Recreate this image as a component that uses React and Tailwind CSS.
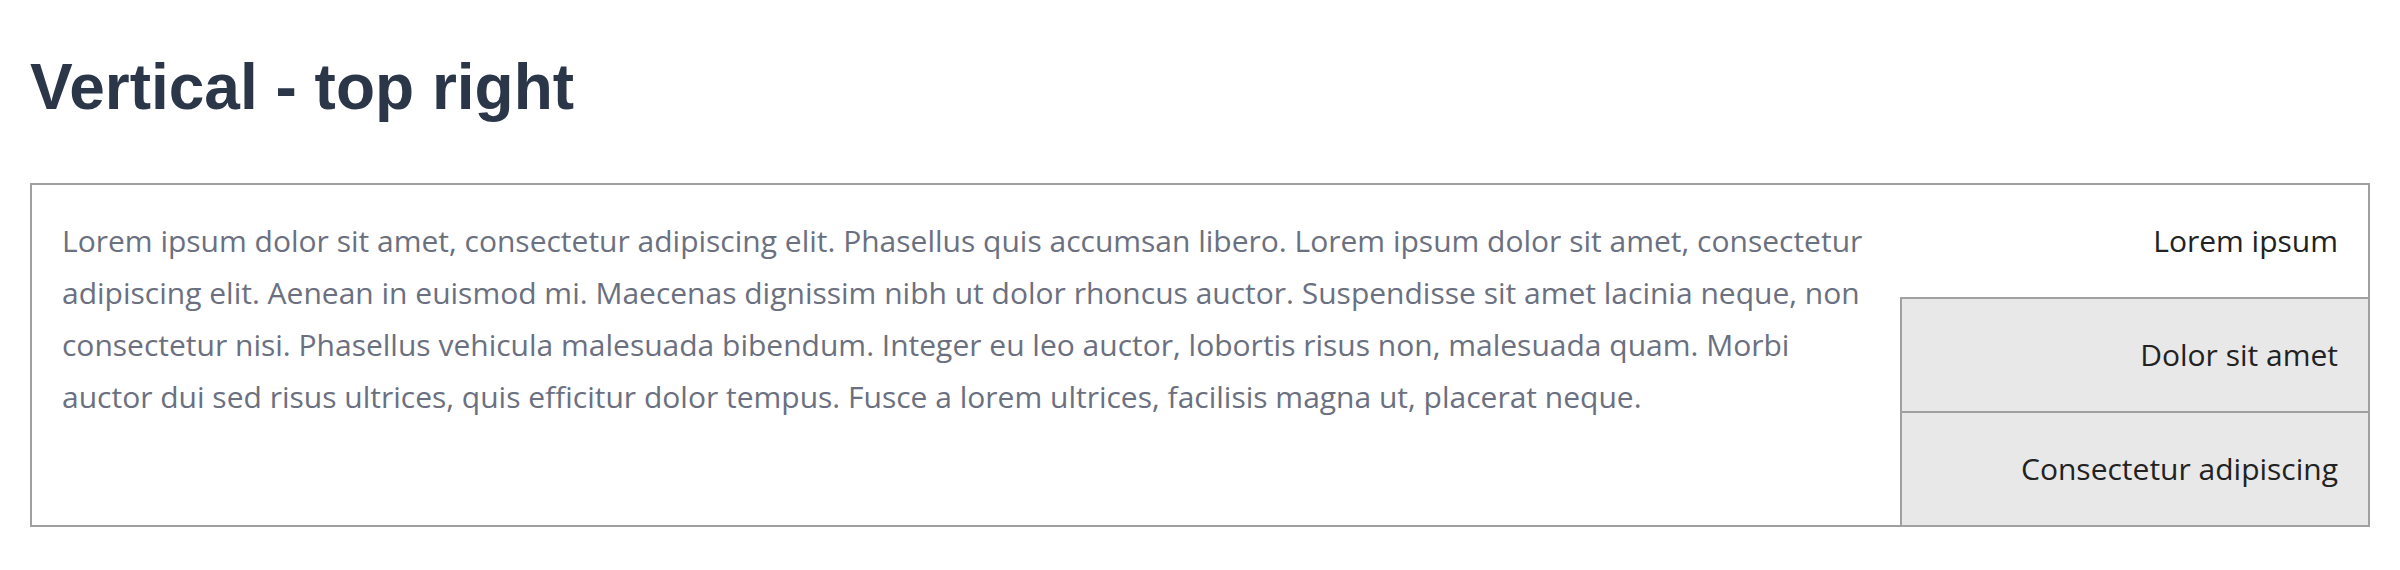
import React from 'react'

const tabs = ['Lorem ipsum', 'Dolor sit amet', 'Consectetur adipiscing']

export default function App() {
  return (
    <div className="min-h-screen bg-white px-[30px] pt-[51px] font-['Open_Sans',sans-serif]">
      <h1 className="mb-[59px] font-['Liberation_Sans',Arial,sans-serif] text-[64px] leading-[73px] font-bold text-[#2b3648]">
        Vertical - top right
      </h1>

      {/* Tabs container */}
      <div className="flex border-2 border-[#a0a0a0]">
        <div className="flex-1 p-[30px] text-[30px] leading-[52px] text-[#6b7080]">
          Lorem ipsum dolor sit amet, consectetur adipiscing elit. Phasellus quis accumsan libero. Lorem ipsum dolor sit amet, consectetur adipiscing elit. Aenean in euismod mi. Maecenas dignissim nibh ut dolor rhoncus auctor. Suspendisse sit amet lacinia neque, non consectetur nisi. Phasellus vehicula malesuada bibendum. Integer eu leo auctor, lobortis risus non, malesuada quam. Morbi auctor dui sed risus ultrices, quis efficitur dolor tempus. Fusce a lorem ultrices, facilisis magna ut, placerat neque.
        </div>
        <div className="flex w-[468px] flex-col text-right text-[30px] leading-[52px] text-[#222]">
          {tabs.map((t, i) => (
            <div
              key={t}
              className={
                i === 0
                  ? 'border-b-2 border-[#a0a0a0] bg-white p-[30px]'
                  : i === 1
                    ? 'border-b-2 border-l-2 border-[#a0a0a0] bg-[#e8e8e8] p-[30px]'
                    : 'border-l-2 border-[#a0a0a0] bg-[#e8e8e8] p-[30px]'
              }
            >
              {t}
            </div>
          ))}
        </div>
      </div>
    </div>
  )
}
